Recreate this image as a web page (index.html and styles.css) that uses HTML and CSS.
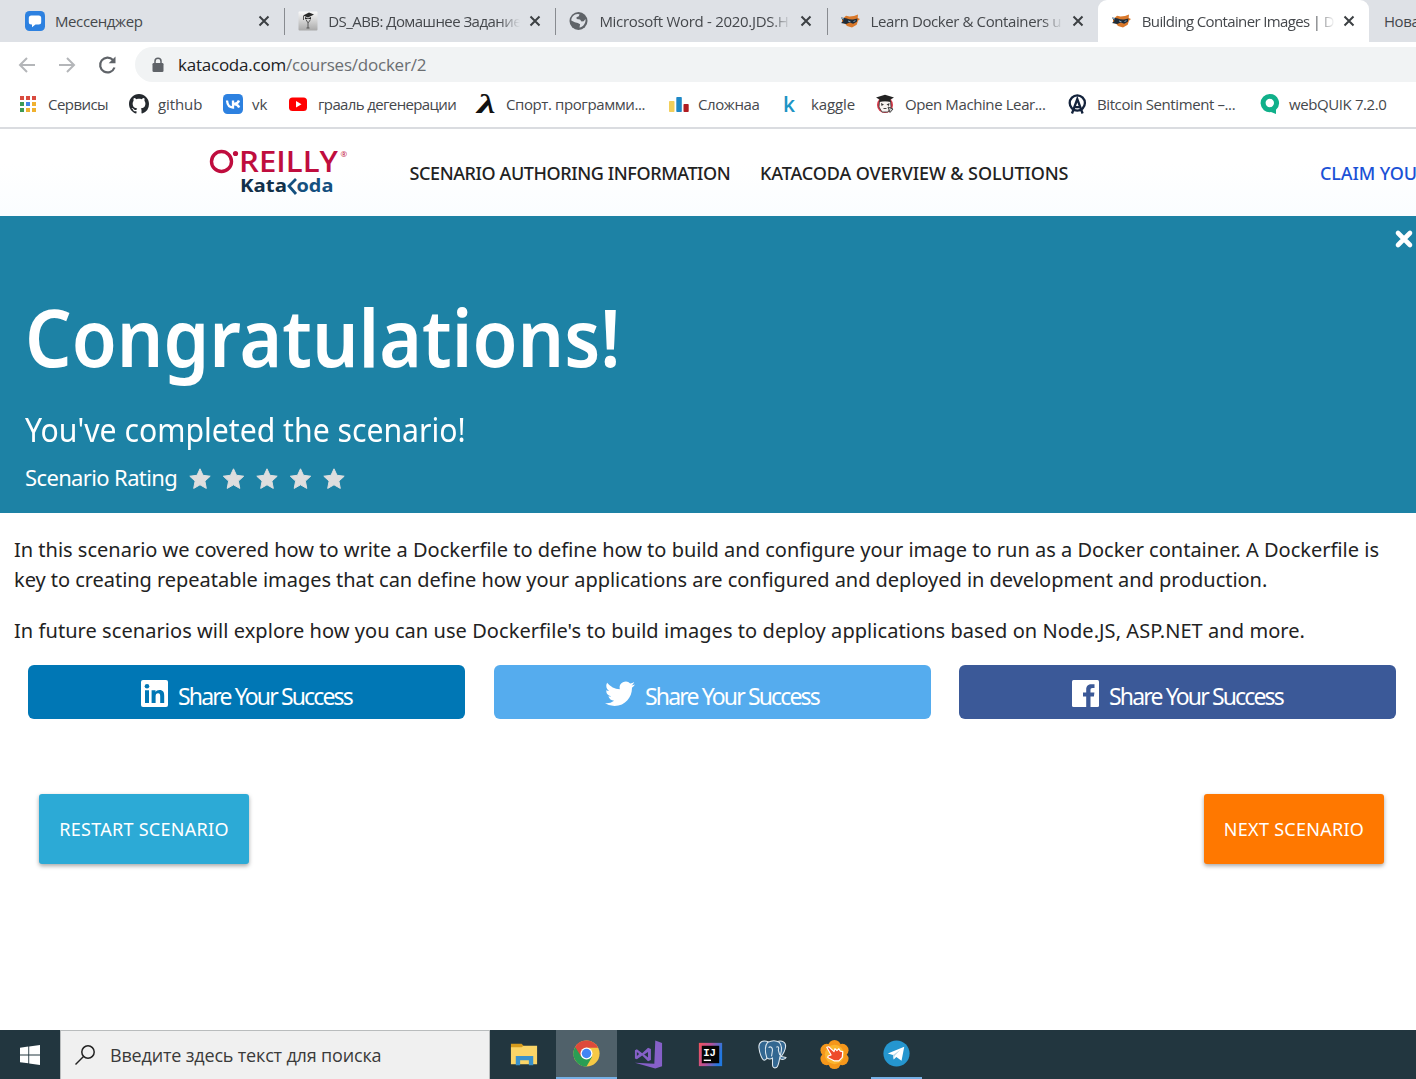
FILE: index.html
```html
<!DOCTYPE html>
<html lang="ru">
<head>
<meta charset="utf-8">
<title>Building Container Images</title>
<link rel="stylesheet" href="styles.css">
</head>
<body>
<header class="browser">
  <div class="tabs">
    <div class="tab">
      <svg class="ico" viewBox="0 0 20 20"><rect width="20" height="20" rx="4.5" fill="#2d81e0"/><path d="M6.300 4.500h7.400a2.500 2.500 0 0 1 2.500 2.500v4a2.500 2.500 0 0 1-2.500 2.500H10.500L7 16.300v-2.800h-.7A2.500 2.500 0 0 1 3.800 11V7a2.500 2.500 0 0 1 2.500-2.500z" fill="#fff"/></svg>
      <span class="title"><span class="t">Мессенджер</span></span>
      <svg class="close" viewBox="0 0 12 12"><path d="M1.500 1.500l9 9M10.500 1.500l-9 9"/></svg>
    </div>
    <div class="tab divided">
      <svg class="ico" viewBox="0 0 20 20"><defs><linearGradient id="silver" x1="0" y1="0" x2="0" y2="1"><stop offset="0" stop-color="#fafafa"/><stop offset="1" stop-color="#a9a9a9"/></linearGradient></defs><rect x=".5" y=".5" width="19" height="19" rx="1" fill="url(#silver)"/><path d="M5 4.500l6-3 5 2-6 3zM7 6l3 1.500L13 6v2H7z" fill="#292929"/><path d="M5.500 5v4M8 8.500q1 3 2.500 3l2-3M10 11v6M8.500 17h3" stroke="#555" fill="none"/></svg>
      <span class="title fade"><span class="t tight">DS_ABB: Домашнее Задание</span></span>
      <svg class="close" viewBox="0 0 12 12"><path d="M1.500 1.500l9 9M10.500 1.500l-9 9"/></svg>
    </div>
    <div class="tab divided">
      <svg class="ico" viewBox="0 0 20 20"><circle cx="9.500" cy="10" r="9" fill="#5f6368"/><path d="M2.300 9.500C2.300 6 5 3 8.500 3l2 .3-.7 2-2.300.9.2 1.700 3.300.5 1.500 2.200 2.200-.4 1.800-2.200c.5 4-2.200 8-6 8.600l.6-3.300-2.300-1.300-3-.7z" fill="#dee1e6"/></svg>
      <span class="title fade"><span class="t loose">Microsoft Word - 2020.JDS.H</span></span>
      <svg class="close" viewBox="0 0 12 12"><path d="M1.500 1.500l9 9M10.500 1.500l-9 9"/></svg>
    </div>
    <div class="tab divided">
      <svg class="ico" viewBox="0 0 20 20"><g id="ninja"><path d="M1 8.500l4-3.800 3.500.8L13 5l4-1.500-.3 3.500L19 8l-2 1.800-1.300 4L11 16.500 6 15l-2-2.500-3-1z" fill="#d9782a"/><path d="M0 6.500l5 .8q4 1.500 7 1.200l4.500-1-.7 3.300-3.600 2-3.500-1.200-3.500 1.500L0 12l2.500-2z" fill="#1f2c38"/><path d="M0 7l3 1M7 10l2.500.8M12.500 10.500l2-.8" stroke="#7fa6c2"/></g></svg>
      <span class="title fade"><span class="t">Learn Docker &amp; Containers u</span></span>
      <svg class="close" viewBox="0 0 12 12"><path d="M1.500 1.500l9 9M10.500 1.500l-9 9"/></svg>
    </div>
    <div class="tab active">
      <svg class="ico" viewBox="0 0 20 20"><use href="#ninja"/></svg>
      <span class="title fade"><span class="t tighter">Building Container Images | D</span></span>
      <svg class="close" viewBox="0 0 12 12"><path d="M1.500 1.500l9 9M10.500 1.500l-9 9"/></svg>
    </div>
    <div class="tab last"><span class="t">Новая вкладка</span></div>
  </div>
  <div class="toolbar">
    <svg class="nav" viewBox="0 0 20 20"><path d="M18 10H3M10 3l-7 7 7 7" stroke="#b4b6b9"/></svg>
    <svg class="nav" viewBox="0 0 20 20"><path d="M2 10h15M10 3l7 7-7 7" stroke="#b4b6b9"/></svg>
    <svg class="nav" viewBox="0 0 20 20"><path d="M17.500 12.500A7.400 7.400 0 1 1 16 5" stroke="#5f6368" stroke-width="2.200"/><path d="M18.500 1.500v6.800h-6.800z" fill="#5f6368"/></svg>
    <div class="omnibox">
      <svg class="lock" viewBox="0 0 12 16"><rect x=".5" y="6" width="11" height="9" rx="1.300" fill="#5f6368"/><path d="M3 6.500V4.300a3 3 0 0 1 6 0v2.200" fill="none" stroke="#5f6368" stroke-width="1.500"/></svg>
      <span class="url t"><b>katacoda.com</b>/courses/docker/2</span>
    </div>
  </div>
  <nav class="bookmarks">
    <a class="bm w1"><svg class="ico" viewBox="0 0 20 20"><path d="M1 2h4v4H1zM7 2h4v4H7zM13 2h4v4h-4z" fill="#d94b3f"/><path d="M1 8h4v4H1z" fill="#3d9a55"/><path d="M7 8h4v4H7z" fill="#4384e6"/><path d="M13 8h4v4h-4zM7 14h4v4H7zM13 14h4v4h-4z" fill="#f0b12f"/><path d="M1 14h4v4H1z" fill="#3d9a55"/></svg><span class="t tight">Сервисы</span></a>
    <a class="bm w2"><svg class="ico" viewBox="0 0 16 16"><path fill="#24292e" d="M8 0C3.580 0 0 3.580 0 8c0 3.540 2.290 6.530 5.470 7.590.4.070.55-.17.55-.38 0-.19-.01-.82-.01-1.490-2.010.37-2.530-.49-2.690-.94-.09-.23-.48-.94-.82-1.130-.28-.15-.68-.52-.01-.53.63-.01 1.080.58 1.230.82.72 1.210 1.870.87 2.330.66.07-.52.28-.87.51-1.070-1.780-.2-3.640-.89-3.640-3.950 0-.87.31-1.590.82-2.150-.08-.2-.36-1.020.08-2.120 0 0 .67-.21 2.200.82.64-.18 1.320-.27 2-.27s1.360.09 2 .27c1.530-1.040 2.200-.82 2.200-.82.44 1.100.16 1.920.08 2.120.51.56.82 1.270.82 2.150 0 3.070-1.870 3.750-3.650 3.950.29.25.54.73.54 1.480 0 1.070-.01 1.930-.01 2.200 0 .21.15.46.55.38A8.010 8.010 0 0 0 16 8c0-4.420-3.580-8-8-8z"/></svg><span class="t plain">github</span></a>
    <a class="bm w3"><svg class="ico" viewBox="0 0 20 20"><rect width="20" height="20" rx="4.500" fill="#2d81e0"/><path d="M4 6.500c.4 4.500 2.400 7 6 7v-7M16 6.500c-.7 2-2.500 3.300-5 3.500 2.500.2 4.300 1.500 5.200 3.500" stroke="#fff" stroke-width="2.300" fill="none"/></svg><span class="t plain">vk</span></a>
    <a class="bm w4"><svg class="ico" viewBox="0 0 20 20"><rect x="0" y="3.500" width="18" height="13.500" rx="3.500" fill="#f00"/><path d="M7 7l5.500 3.200L7 13.500z" fill="#fff"/></svg><span class="t tighter">грааль дегенерации</span></a>
    <a class="bm w5"><svg class="ico" viewBox="0 0 20 20"><text x="0" y="19" class="lambda" textLength="18" lengthAdjust="spacingAndGlyphs">λ</text></svg><span class="t">Спорт. программи...</span></a>
    <a class="bm w6"><svg class="ico" viewBox="0 0 20 20"><rect x="0" y="7" width="5.500" height="11" rx=".8" fill="#f2cf5b"/><rect x="7.300" y="3" width="5.500" height="15" rx=".8" fill="#1e88c7"/><rect x="14.500" y="10" width="5.200" height="8" rx=".8" fill="#b01c22"/></svg><span class="t">Сложнаа</span></a>
    <a class="bm w7"><svg class="ico" viewBox="0 0 20 20"><text x="1" y="18" class="kaggle">k</text></svg><span class="t plain">kaggle</span></a>
    <a class="bm w8"><svg class="ico" viewBox="0 0 20 20"><circle cx="9" cy="11" r="8" fill="#d83a4a"/><path d="M3.500 7h11l.5 6-3 5H6l-3-5z" fill="#f6f2f0" stroke="#333" stroke-width=".8"/><path d="M0 3.500L9 .8l9 2.700-3.500 2V8Q9 6 3.500 8V5.500z" fill="#222"/><path d="M5 9l3 1.500L5.500 12zM13.500 9l-3 1.500 2.500 1.500z" fill="#333"/><path d="M7.500 14.500h3M12 13l5 2-3 3.500z" stroke="#444" fill="#ccc"/></svg><span class="t">Open Machine Lear...</span></a>
    <a class="bm w9"><svg class="ico" viewBox="0 0 20 20"><g fill="none" stroke="#14233c" stroke-width="2.300"><circle cx="9.300" cy="9" r="7.600"/><path d="M4 19.500L9.300 5l5.300 14.500M6 13.200h6.700"/></g></svg><span class="t">Bitcoin Sentiment –...</span></a>
    <a class="bm"><svg class="ico" viewBox="0 0 20 20"><path d="M10 0a9 9 0 0 1 6 15.700V20l-5-1.900A9.100 9.100 0 1 1 10 0z" fill="#10b08a"/><circle cx="9.800" cy="9" r="4.200" fill="#fff"/></svg><span class="t">webQUIK 7.2.0</span></a>
  </nav>
</header>
<div class="sitenav">
  <svg class="logo" viewBox="0 0 140 48">
    <circle cx="12.500" cy="12.500" r="10" fill="none" stroke="#bf0d3e" stroke-width="3.400"/><circle cx="26.500" cy="4.500" r="2.600" fill="#bf0d3e"/>
    <text class="oreilly" x="30" y="23.300" textLength="99" lengthAdjust="spacingAndGlyphs">REILLY</text>
    <text class="reg" x="131.500" y="8">®</text>
    <text class="kata" x="31" y="43" textLength="47" lengthAdjust="spacingAndGlyphs">Kata</text>
    <path d="M87 30l-7 7 7 8" fill="none" stroke="#14507f" stroke-width="2.800"/>
    <text class="coda" x="87.500" y="43" textLength="37" lengthAdjust="spacingAndGlyphs">oda</text>
  </svg>
  <span class="link l1 t">SCENARIO AUTHORING INFORMATION</span>
  <span class="link l2 t">KATACODA OVERVIEW &amp; SOLUTIONS</span>
  <span class="link claim t">CLAIM YOUR</span>
</div>
<section class="hero">
  <svg class="dismiss" viewBox="0 0 18 18"><path d="M3 3l12 12M15 3L3 15" stroke="#fff" stroke-width="4.600" stroke-linecap="round"/></svg>
  <h1>Congratulations!</h1>
  <h2>You've completed the scenario!</h2>
  <div class="rating"><span class="t">Scenario Rating</span>
    <svg class="stars" viewBox="0 0 156 22"><defs><path id="star" d="M11 .8l3 6.500 7.200.9-5.300 4.900 1.400 7.300-6.300-3.600-6.300 3.600 1.400-7.300L.8 8.200 8 7.300z" fill="#dedede" stroke="#dedede" stroke-linejoin="round"/></defs><use href="#star"/><use href="#star" x="33.500"/><use href="#star" x="67"/><use href="#star" x="100.500"/><use href="#star" x="134"/></svg>
  </div>
</section>
<main class="content">
  <p><span class="t">In this scenario we covered how to write a Dockerfile to define how to build and configure your image to run as a Docker container. A Dockerfile is</span><br><span class="t second">key to creating repeatable images that can define how your applications are configured and deployed in development and production.</span></p>
  <p><span class="t third">In future scenarios will explore how you can use Dockerfile's to build images to deploy applications based on Node.JS, ASP.NET and more.</span></p>
  <div class="shares">
    <a class="share linkedin"><svg viewBox="0 0 27 27" width="27" height="27"><rect width="27" height="27" rx="2" fill="#fff"/><path d="M4 10.300h4V23H4zM10.600 10.300h3.900V12c.7-1.200 2-2 4-2 3.600 0 4.700 2.200 4.700 5.700V23h-4v-6.600c0-1.900-.4-3.100-2.100-3.100s-2.500 1.200-2.500 3.100V23h-4z" fill="#0077b5"/><circle cx="6" cy="6.200" r="2.300" fill="#0077b5"/></svg><span class="t">Share Your Success</span></a>
    <a class="share twitter"><svg viewBox="0 0 24 20" width="30" height="26"><path fill="#fff" d="M24 2.370a9.800 9.800 0 0 1-2.830.78A4.930 4.930 0 0 0 23.340.42a9.900 9.900 0 0 1-3.130 1.190A4.920 4.920 0 0 0 11.830 6.100 13.980 13.980 0 0 1 1.670.95a4.930 4.930 0 0 0 1.530 6.570 4.900 4.900 0 0 1-2.230-.61v.06a4.930 4.930 0 0 0 3.950 4.830 4.900 4.900 0 0 1-2.220.08 4.930 4.930 0 0 0 4.600 3.420A9.900 9.900 0 0 1 0 17.340a13.950 13.950 0 0 0 7.550 2.210c9.060 0 14.010-7.500 14.010-14.010l-.01-.64A10 10 0 0 0 24 2.370z"/></svg><span class="t">Share Your Success</span></a>
    <a class="share facebook"><svg viewBox="0 0 27 27" width="27" height="27"><rect width="27" height="27" rx="1.500" fill="#fff"/><path d="M14.200 27V16.500H11V12.400h3.200V9.500c0-3.500 2.100-5.300 5.300-5.300h3v3.900h-2c-1.600 0-2 .8-2 2v2.300h3.900l-.5 4.100h-3.400V27z" fill="#3b5998"/></svg><span class="t">Share Your Success</span></a>
  </div>
  <div class="actions"><a class="btn restart"><span class="t">RESTART SCENARIO</span></a><a class="btn next"><span class="t">NEXT SCENARIO</span></a></div>
</main>
<footer class="taskbar">
  <div class="start"><svg viewBox="0 0 20 20" width="20" height="20"><path fill="#fff" d="M0 2.800L8.300 1.600v7.900H0zM9.200 1.500L20 0v9.500H9.200zM0 10.400h8.300v7.900L0 17.200zM9.200 10.400H20V20L9.200 18.500z"/></svg></div>
  <div class="search"><svg viewBox="0 0 20 20" width="20" height="20"><circle cx="13" cy="7" r="6.200"/><path d="M8.500 11.500L.5 19.500"/></svg><span class="t">Введите здесь текст для поиска</span></div>
  <div class="apps">
    <div class="app"><svg viewBox="0 0 32 32"><path d="M2 5h11l2 2v4H2z" fill="#d69b1c"/><path d="M2 8.500h11l2-1.500h14v19H2z" fill="#fbd567"/><path d="M7 27V17.500h18V27h-4.500v-5h-9v5z" fill="#3a92cc"/></svg></div>
    <div class="app current"><svg viewBox="0 0 32 32"><circle cx="16" cy="16" r="13.500" fill="#f6c945"/><path d="M16 16L4.300 9.250A13.500 13.500 0 0 0 16 29.500l5.800-10.100z" fill="#2a9d54"/><path d="M16 10h11.900A13.500 13.500 0 0 0 4.300 9.250L10.500 19z" fill="#de4a3b"/><circle cx="16" cy="16" r="6.200" fill="#fff"/><circle cx="16" cy="16" r="4.900" fill="#4285f4"/></svg></div>
    <div class="app"><svg viewBox="0 0 32 32"><path d="M23 1.500l7 2.500v24l-7 2.500L2 24.500l20 1z" fill="#8660c8"/><path d="M2 11.500l2-1 5.500 4.300L15.500 9l3 1.300v11.400l-3 1.300-6-6L4 21l-2-1zm2 2v4l2.300-2zm11.500 0L11.500 16l4 3z" fill="#8660c8" fill-rule="evenodd"/></svg></div>
    <div class="app"><svg viewBox="0 0 32 32"><defs><linearGradient id="idea" x1="0" y1="0" x2="1" y2=".3"><stop offset="0" stop-color="#f4535b"/><stop offset=".5" stop-color="#b6529b"/><stop offset="1" stop-color="#2178e0"/></linearGradient></defs><rect x="4" y="4" width="24" height="24" fill="url(#idea)"/><rect x="7" y="7" width="18" height="18" fill="#050505"/><text x="8.500" y="17.500" class="ij">IJ</text><path d="M9 22h7.500" stroke="#fff" stroke-width="1.500"/></svg></div>
    <div class="app"><svg viewBox="0 0 32 32"><g fill="#336791" stroke="#dfe8ee" stroke-width="1.100" stroke-linejoin="round"><path d="M12 3C6 .5 1.500 3 2 9c.5 5 3 12.500 5.500 13 2 0 3-3 4-4.500z"/><path d="M21 2.500c5-1.500 9 1 8.500 5.500-.4 4-3 8-4.500 10l5 1c-1 2-4 2.500-6 1.500z"/><path d="M11 3.500c4-2 9-2 12 0 3 3 2.500 9 1 14-1 1.500-1 10-4 12-2.500 1-4-.5-4-3v-7c-1.500 1.500-5 1.500-6-.5-1.500-5-2-12 1-15.500z"/><path d="M12 9c2-2 4 0 4 2.500l-1 6.500M20 8.500c2-1.500 3 0 2 3l1.500 5" fill="none"/></g></svg></div>
    <div class="app"><svg viewBox="0 0 32 32"><g fill="#f5971b"><circle cx="16" cy="7.500" r="6.500"/><circle cx="24" cy="11.500" r="6.500"/><circle cx="24" cy="20.500" r="6.500"/><circle cx="16" cy="24.500" r="6.500"/><circle cx="8" cy="20.500" r="6.500"/><circle cx="8" cy="11.500" r="6.500"/></g><circle cx="16" cy="16" r="10" fill="#fbb52f"/><path d="M8 8.500l2-.5 5.500 5 1-3 2 2 2-2 1.500 2.500 2.500.5-.5 6-3.500 3.500h-5L9 19l.5-1.500 3-1z" fill="#ee4b2b" stroke="#fff" stroke-width="1.200" stroke-linejoin="round"/></svg></div>
    <div class="app running"><svg viewBox="0 0 32 32"><circle cx="16" cy="16" r="13.500" fill="#2596cf"/><path d="M7 16l17-7-2.800 14.500-5.400-3.800-2.700 2.600-.8-4.800z" fill="#fff"/><path d="M12.300 17.500l7.700-5.500-6 6.500-.9 3.800z" fill="#b9d9ea"/></svg></div>
  </div>
</footer>
</body>
</html>
```
FILE: styles.css
```css
* { box-sizing: border-box; }
body { margin: 0; width: 1416px; height: 1079px; overflow: hidden; display: flex; flex-direction: column; background: #fff; color: #222; font-family: "Noto Sans", "Open Sans", sans-serif; }
svg { display: block; flex: none; overflow: visible; }
.t { white-space: nowrap; }
.browser { font-family: "Open Sans", sans-serif; font-size: 15px; color: #45484c; letter-spacing: -.4px; }
.plain { letter-spacing: -.1px; }
.loose { letter-spacing: -.3px; }
.tight { letter-spacing: -.55px; }
.tighter { letter-spacing: -.63px; }
.tabs { display: flex; height: 42px; background: #dee1e6; padding-left: 13px; overflow: hidden; }
.tab { flex: none; width: 271.200px; padding: 0 0 1px 12px; display: flex; align-items: center; }
.ico { width: 20px; height: 20px; }
.title { width: 193px; margin: 0 10px; overflow: hidden; white-space: nowrap; }
.fade { -webkit-mask-image: linear-gradient(90deg, #000 89%, transparent); mask-image: linear-gradient(90deg, #000 89%, transparent); }
.close { width: 12px; height: 12px; stroke: #3c4043; stroke-width: 2; fill: none; }
.divided { padding-left: 13px; border-left: 1px solid; border-image: linear-gradient(transparent 9px, #888b90 9px, #888b90 34px, transparent 34px) 1; }
.divided .title { width: 192px; margin-right: 9px; }
.active { padding-left: 14px; background: #fff; border-radius: 9px 9px 0 0; }
.active .title { margin-right: 8px; }
.last { padding-left: 15px; }
.toolbar { height: 45px; display: flex; align-items: center; padding-left: 17px; }
.nav { width: 20px; height: 20px; margin-right: 20px; fill: none; stroke-width: 2; }
.omnibox { flex: 1; height: 35px; margin-left: -2px; padding-left: 17px; display: flex; align-items: center; background: #f1f3f4; border-radius: 18px 0 0 18px; }
.lock { width: 12px; height: 16px; }
.url { margin-left: 14px; font-size: 17px; letter-spacing: -.23px; color: #6b6e72; }
.url b { font-weight: 400; color: #202124; }
.bookmarks { height: 42px; padding: 0 0 6px 19px; display: flex; align-items: center; border-bottom: 2px solid #dadce0; }
.bm { flex: none; display: flex; align-items: center; gap: 9px; }
.w1 { width: 110px; } .w2 { width: 94px; } .w3 { width: 66px; } .w4 { width: 188px; } .w5 { width: 192px; }
.w6 { width: 113px; } .w7 { width: 94px; } .w8 { width: 192px; } .w9 { width: 192px; }
.lambda { font: italic 700 27px "Liberation Serif", serif; fill: #111; }
.kaggle { font: 600 21px "Open Sans", sans-serif; fill: #1d94c4; }
.sitenav { height: 87px; flex: none; display: flex; align-items: center; padding-left: 209px; background: linear-gradient(#fff 40%, #fafdff); }
.logo { width: 140px; height: 48px; }
.oreilly { font: 600 29.500px "Open Sans", sans-serif; fill: #bf0d3e; }
.reg { font: 8px "Open Sans", sans-serif; fill: #bf0d3e; }
.kata { font: 700 18.500px "Open Sans", sans-serif; fill: #123049; }
.coda { font: 700 18.500px "Open Sans", sans-serif; fill: #14507f; }
.link { flex: none; font-size: 18px; font-weight: 500; letter-spacing: -.4px; }
.l1 { margin-left: 60.500px; width: 350.500px; }
.l2 { width: 560px; letter-spacing: -.1px; }
.claim { color: #1b51d6; letter-spacing: -.1px; }
.hero { height: 297px; flex: none; position: relative; padding: 64px 0 0 25px; background: #1d82a5; color: #fff; }
.dismiss { position: absolute; left: 1395px; top: 14px; width: 18px; height: 18px; }
h1 { margin: 0; font-size: 80px; line-height: 112px; font-weight: 600; transform: scaleX(.914); transform-origin: 0 0; }
h2 { margin: 14px 0 0; font-size: 32px; line-height: 48px; font-weight: 400; transform: scaleX(.943); transform-origin: 0 0; }
.rating { display: flex; align-items: center; height: 46px; font-size: 22px; letter-spacing: -.63px; }
.stars { width: 156px; height: 22px; margin: 4px 0 0 12px; }
.content { flex: 1; padding-top: 22px; }
p { margin: 0 0 21px 14px; font-size: 20px; line-height: 30px; }
.second { letter-spacing: -.04px; }
.third { letter-spacing: .06px; }
.shares { display: flex; gap: 28.500px; margin: -2px 0 0 28px; }
.share { width: 437px; height: 54px; border-radius: 6px; display: flex; align-items: center; justify-content: center; gap: 10px; color: #fff; font-size: 23px; letter-spacing: -1.850px; }
.share svg { margin-top: 3px; }
.linkedin { background: #0077b5; } .twitter { background: #55acee; } .facebook { background: #3b5998; }
.share .t { padding-top: 8px; }
.actions { display: flex; justify-content: space-between; margin: 75px 32px 0 39px; }
.btn { height: 70px; display: flex; align-items: center; justify-content: center; border-radius: 3px; color: #fff; font-size: 18px; letter-spacing: .28px; box-shadow: 0 2px 4px rgba(0,0,0,.35); }
.restart { width: 210px; background: #2caad6; } .next { width: 180px; background: #ff7800; }
.taskbar { height: 49px; flex: none; display: flex; background: #22363f; }
.start { width: 60px; display: flex; align-items: center; justify-content: center; }
.search { width: 430px; display: flex; align-items: center; padding-left: 14px; gap: 15px; background: #f0f0f0; border: 1px solid #b9bcbd; border-width: 1px 1px 0; font: 18px "Open Sans", sans-serif; letter-spacing: -.17px; color: #3a3a3a; }
.search svg { fill: none; stroke: #222; stroke-width: 1.500; }
.apps { display: flex; padding-left: 4px; }
.app { width: 62px; display: flex; align-items: center; justify-content: center; }
.app svg { width: 31px; height: 31px; margin-right: 1px; }
.current { width: 61px; margin-right: 1px; background: #50616a; border-bottom: 2px solid #76b0e5; }
.running { width: 51px; margin-left: 5px; border-bottom: 2px solid #76b0e5; }
.ij { font: 700 11px "Liberation Mono", monospace; fill: #fff; }
```
